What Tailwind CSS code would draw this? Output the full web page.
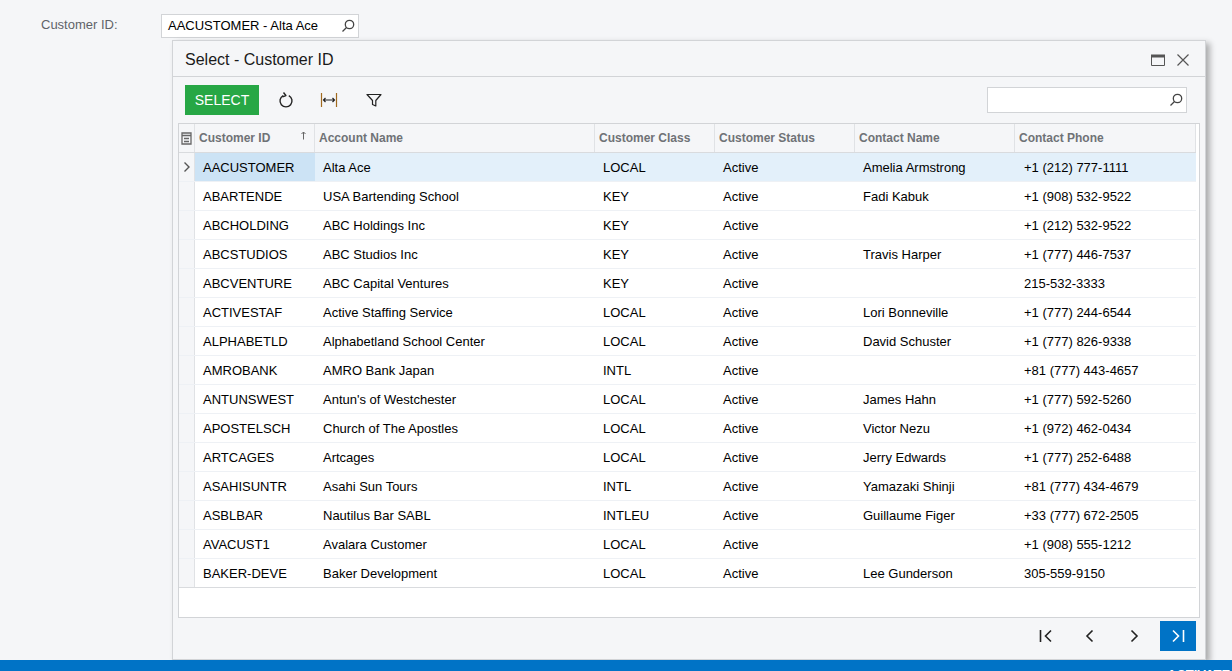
<!DOCTYPE html>
<html lang="en">
<head>
    <meta charset="UTF-8">
    <title>Select - Customer ID</title>
    <script src="https://cdn.jsdelivr.net/npm/@tailwindcss/browser@4"></script>
</head>
<body class="h-[671px] overflow-hidden bg-[#f5f6f8] font-['Liberation_Sans',Arial,sans-serif] text-[13px] text-[#1a1a1a]">
    <div class="relative flex h-full flex-col">
        <!-- Form row -->
        <div class="flex h-[40px] flex-none items-start pt-[14px]">
            <label class="ml-[41px] w-[120px] pt-[2px] text-[13px] leading-[18px] text-[#5f6368]">Customer ID:</label>
            <div class="flex h-[24px] w-[198px] items-center justify-between border border-[#d2d4d7] bg-white pl-[6px] pr-[2px]">
                <span class="text-[13px] text-black">AACUSTOMER - Alta Ace</span>
                <svg class="h-[16px] w-[16px] text-[#444]" viewBox="0 0 16 16" fill="none" stroke="currentColor" stroke-width="1.3"><circle cx="9.500" cy="6.500" r="4.200"/><path d="M6.500 9.500 2.500 13.500"/></svg>
            </div>
        </div>
        <div class="flex-1"></div>
        <!-- Bottom bar -->
        <div class="relative z-10 h-[11px] flex-none overflow-hidden bg-[#0073c6]">
            <span class="absolute left-[1167px] top-[8px] text-[13px] font-bold leading-[14px] text-white">ACTIVATE</span>
        </div>

        <!-- Lookup dialog -->
        <div class="absolute left-[172px] top-[40px] flex h-[620px] w-[1034px] flex-col border border-[#d2d4d7] bg-[#f5f6f8] shadow-[4px_3px_6px_rgba(0,0,0,0.3)]">
            <div class="flex h-[36px] flex-none items-center justify-between border-b border-[#d2d4d7] pl-[12px] pr-[15px] pt-[2px]">
                <h2 class="text-[16px] text-[#1a1a1a]">Select - Customer ID</h2>
                <div class="flex items-center gap-[10px]">
                    <svg class="h-[16px] w-[16px] text-[#555]" viewBox="0 0 16 16" fill="none" stroke="currentColor"><path d="M1.500 3.500h13v10h-13z"/><path d="M1 4h14" stroke-width="3"/></svg>
                    <svg class="h-[14px] w-[14px] text-[#555]" viewBox="0 0 14 14" fill="none" stroke="currentColor" stroke-width="1.2"><path d="M1.500 1.500l11 11M12.500 1.500l-11 11"/></svg>
                </div>
            </div>
            <div class="flex h-[46px] flex-none items-center justify-between pl-[12px] pr-[18px]">
                <div class="flex items-center">
                    <button class="h-[30px] w-[74px] bg-[#27a745] text-[14px] text-white">SELECT</button>
                    <svg class="ml-[18px] h-[18px] w-[18px] text-[#222]" viewBox="0 0 18 18" fill="none" stroke="currentColor" stroke-width="1.4"><path d="M6.200 4.600a6 6 0 1 0 5.600 0"/><path d="M6.500 1.500l2.400 3-3.400 1.400" stroke-linejoin="round"/></svg>
                    <svg class="ml-[25px] h-[18px] w-[18px]" viewBox="0 0 18 18" fill="none" stroke-width="1.200"><path d="M1.500 2v14" stroke="#a06a1e"/><path d="M16.500 2v14" stroke="#a06a1e"/><path d="M3.500 9h11M5.500 7l-2 2 2 2M12.500 7l2 2-2 2" stroke="#222"/></svg>
                    <svg class="ml-[28px] h-[16px] w-[16px] text-[#222]" viewBox="0 0 16 16" fill="none" stroke="currentColor" stroke-width="1.200"><path d="M1 2.500h14L9.800 8.500v5.500l-3.300-1.500v-4z" stroke-linejoin="round"/></svg>
                </div>
                <div class="flex h-[26px] w-[200px] items-center justify-end border border-[#d2d4d7] bg-white pr-[2px]">
                    <svg class="h-[16px] w-[16px] text-[#444]" viewBox="0 0 16 16" fill="none" stroke="currentColor" stroke-width="1.3"><circle cx="9.500" cy="6.500" r="4.200"/><path d="M6.500 9.500 2.500 13.500"/></svg>
                </div>
            </div>
            <!-- Grid -->
            <div class="ml-[5px] h-[495px] w-[1022px] flex-none border border-[#d2d4d7] bg-white pr-[3px]">
                <div class="flex h-[29px] border-b border-[#d9dbde] bg-[#f5f6f8] text-[12px] font-bold text-[#6f7276]">
                    <div class="flex w-[16px] items-center justify-center border-r border-[#e0e2e5]">
                        <svg class="h-[13px] w-[13px] text-[#666]" viewBox="0 0 13 13" fill="none" stroke="currentColor" stroke-width="1.300"><path d="M2 1h9v11H2z"/><path d="M2 3.500h9M4 6.500h5M4 9.500h5"/></svg>
                    </div>
                    <div class="relative flex w-[120px] items-center border-r border-[#e0e2e5] pl-[4px]">Customer ID
                        <svg class="absolute left-[105px] top-[7px] h-[9px] w-[7px] text-[#666]" viewBox="0 0 7 9" fill="none" stroke="currentColor"><path d="M3.500 8.500V1M1.500 3l2-2 2 2"/></svg>
                    </div>
                    <div class="flex w-[280px] items-center border-r border-[#e0e2e5] pl-[4px]">Account Name</div>
                    <div class="flex w-[120px] items-center border-r border-[#e0e2e5] pl-[4px]">Customer Class</div>
                    <div class="flex w-[140px] items-center border-r border-[#e0e2e5] pl-[4px]">Customer Status</div>
                    <div class="flex w-[160px] items-center border-r border-[#e0e2e5] pl-[4px]">Contact Name</div>
                    <div class="flex w-[181px] items-center border-r border-[#e0e2e5] pl-[4px]">Contact Phone</div>
                </div>
                <div id="rows"></div>
            </div>
            <!-- Pager -->
            <div class="flex flex-1 items-start justify-end gap-[14px] pr-[9px] pt-[3px]">
                <button class="flex h-[30px] w-[30px] items-center justify-center text-[#222]">
                    <svg class="h-[14px] w-[14px]" viewBox="0 0 14 14" fill="none" stroke="currentColor" stroke-width="1.600"><path d="M1.500 1v12M12 1.500 6.500 7l5.500 5.500"/></svg>
                </button>
                <button class="flex h-[30px] w-[30px] items-center justify-center text-[#222]">
                    <svg class="h-[14px] w-[14px]" viewBox="0 0 14 14" fill="none" stroke="currentColor" stroke-width="1.600"><path d="M9.500 1.500 4 7l5.500 5.500"/></svg>
                </button>
                <button class="flex h-[30px] w-[30px] items-center justify-center text-[#222]">
                    <svg class="h-[14px] w-[14px]" viewBox="0 0 14 14" fill="none" stroke="currentColor" stroke-width="1.600"><path d="M4.500 1.500 10 7l-5.500 5.500"/></svg>
                </button>
                <button class="-ml-[3px] flex h-[30px] w-[36px] items-center justify-center bg-[#0073c6] text-white">
                    <svg class="h-[14px] w-[14px]" viewBox="0 0 14 14" fill="none" stroke="currentColor" stroke-width="1.600"><path d="M12.500 1v12M2 1.500 7.500 7 2 12.500"/></svg>
                </button>
            </div>
        </div>
    </div>

    <script>
        const customers = [
            ['AACUSTOMER', 'Alta Ace', 'LOCAL', 'Active', 'Amelia Armstrong', '+1 (212) 777-1111'],
            ['ABARTENDE', 'USA Bartending School', 'KEY', 'Active', 'Fadi Kabuk', '+1 (908) 532-9522'],
            ['ABCHOLDING', 'ABC Holdings Inc', 'KEY', 'Active', '', '+1 (212) 532-9522'],
            ['ABCSTUDIOS', 'ABC Studios Inc', 'KEY', 'Active', 'Travis Harper', '+1 (777) 446-7537'],
            ['ABCVENTURE', 'ABC Capital Ventures', 'KEY', 'Active', '', '215-532-3333'],
            ['ACTIVESTAF', 'Active Staffing Service', 'LOCAL', 'Active', 'Lori Bonneville', '+1 (777) 244-6544'],
            ['ALPHABETLD', 'Alphabetland School Center', 'LOCAL', 'Active', 'David Schuster', '+1 (777) 826-9338'],
            ['AMROBANK', 'AMRO Bank Japan', 'INTL', 'Active', '', '+81 (777) 443-4657'],
            ['ANTUNSWEST', "Antun's of Westchester", 'LOCAL', 'Active', 'James Hahn', '+1 (777) 592-5260'],
            ['APOSTELSCH', 'Church of The Apostles', 'LOCAL', 'Active', 'Victor Nezu', '+1 (972) 462-0434'],
            ['ARTCAGES', 'Artcages', 'LOCAL', 'Active', 'Jerry Edwards', '+1 (777) 252-6488'],
            ['ASAHISUNTR', 'Asahi Sun Tours', 'INTL', 'Active', 'Yamazaki Shinji', '+81 (777) 434-4679'],
            ['ASBLBAR', 'Nautilus Bar SABL', 'INTLEU', 'Active', 'Guillaume Figer', '+33 (777) 672-2505'],
            ['AVACUST1', 'Avalara Customer', 'LOCAL', 'Active', '', '+1 (908) 555-1212'],
            ['BAKER-DEVE', 'Baker Development', 'LOCAL', 'Active', 'Lee Gunderson', '305-559-9150']
        ];

        function createRow(c, i) {
            const selected = i === 0;
            const last = i === customers.length - 1;
            const arrow = selected
                ? '<svg class="h-[10px] w-[8px] text-[#555]" viewBox="0 0 8 10" fill="none" stroke="currentColor" stroke-width="1.4"><path d="M1.500 .5 6 5 1.500 9.500"/></svg>'
                : '';
            return `
                <div class="flex h-[29px] border-b pt-[1px] text-[13px] text-black ${last ? 'border-[#d9dbde]' : 'border-[#eef1f5]'} ${selected ? 'bg-[#e3f0fa]' : ''}">
                    <div class="-mt-[1px] flex w-[16px] items-center justify-center border-r border-[#e0e2e5] bg-[#f5f6f8]">${arrow}</div>
                    <div class="-mt-[1px] flex w-[120px] items-center pl-[8px] pt-[1px] ${selected ? 'bg-[#cce3f5]' : ''}">${c[0]}</div>
                    <div class="flex w-[280px] items-center pl-[8px]">${c[1]}</div>
                    <div class="flex w-[120px] items-center pl-[8px]">${c[2]}</div>
                    <div class="flex w-[140px] items-center pl-[8px]">${c[3]}</div>
                    <div class="flex w-[160px] items-center pl-[8px]">${c[4]}</div>
                    <div class="flex w-[181px] items-center pl-[9px]">${c[5]}</div>
                </div>
            `;
        }

        document.getElementById('rows').innerHTML = customers.map(createRow).join('');
    </script>
</body>
</html>
